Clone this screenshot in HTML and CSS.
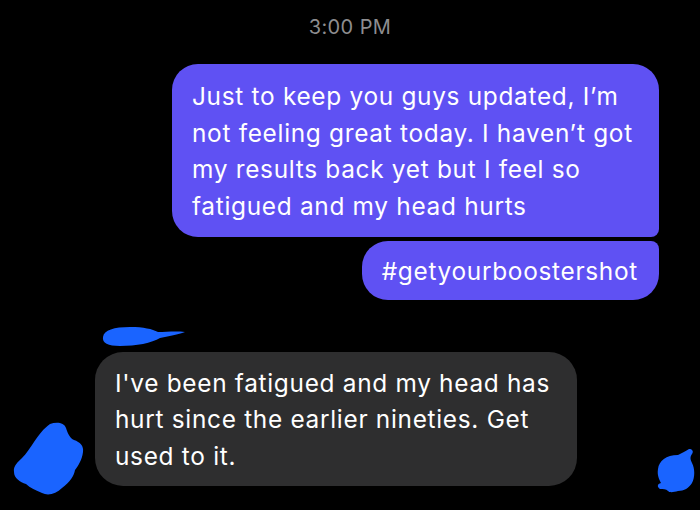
FILE: index.html
```html
<!DOCTYPE html>
<html lang="en">
<head>
  <meta charset="UTF-8">
  <title>Messages</title>
  <link rel="stylesheet" href="styles.css">
</head>
<body>
  <div class="chat">
    <div class="time">3:00 PM</div>

    <div class="out-group">
      <div class="msg out first">Just to keep you guys updated, I’m not feeling great today. I haven’t got my results back yet but I feel so fatigued and my head hurts</div>
      <div class="msg out last">#getyourboostershot</div>
    </div>

    <div class="in-group">
      <svg class="scribble name-scribble" viewBox="0 0 86 21" width="86" height="21">
        <path d="M3 11 C4 4 14 1 30 1 C44 1 52 3 58 6 C66 6 76 5 85 6 C80 8 70 10 60 12 C52 17 36 20 20 20 C8 20 2 17 3 11 Z" />
      </svg>
      <div class="in-row">
        <svg class="scribble avatar-scribble" viewBox="0 0 72 74" width="72" height="74">
          <path d="M38 2 C44 0 52 0 54 6 C56 12 58 16 62 18 C68 20 72 24 71 30 C70 38 66 44 63 48 C62 54 58 60 50 66 C44 72 36 74 30 71 C24 68 18 66 14 62 C8 60 2 56 2 50 C1 44 6 40 10 36 C14 32 18 26 22 20 C26 14 32 6 38 2 Z" />
        </svg>
        <div class="msg in">I've been fatigued and my head has hurt since the earlier nineties. Get used to it.</div>
      </div>
    </div>

    <svg class="scribble corner-scribble" viewBox="0 0 40 44" width="40" height="44">
      <path d="M22 6 C26 4 30 2 33 0 C36 0 38 2 36 5 C34 8 34 10 36 14 C39 20 39 28 36 34 C33 39 28 42 22 42 C18 43 14 44 12 42 C10 40 7 40 4 40 C1 38 1 35 5 34 C3 30 1 26 2 20 C3 12 10 6 22 6 Z" />
    </svg>
  </div>
</body>
</html>
```

FILE: styles.css
```css
* {
  box-sizing: border-box;
}

body {
  margin: 0;
  background: #000000;
  font-family: Inter, 'Liberation Sans', sans-serif;
  -webkit-font-smoothing: antialiased;
}

.chat {
  position: relative;
  width: 700px;
  height: 510px;
  overflow: hidden;
  padding-top: 13px;
}

.time {
  text-align: center;
  color: #8d8d8f;
  font-size: 20px;
  line-height: 28px;
  letter-spacing: 0.4px;
}

.out-group {
  display: flex;
  flex-direction: column;
  align-items: flex-end;
  gap: 4px;
  margin-top: 23px;
  padding-right: 41px;
}

.msg {
  font-size: 24.4px;
  line-height: 36.7px;
  letter-spacing: 0.7px;
  color: #ffffff;
}

.msg.out {
  background: #5f51f3;
}

.msg.out.first {
  width: 487px;
  padding: 14px 20px 12px 20px;
  border-radius: 26px 26px 8px 26px;
}

.msg.out.last {
  padding: 12px 21px 10px 20px;
  border-radius: 26px 8px 26px 26px;
}

.in-group {
  margin-top: 26px;
}

.in-row {
  display: flex;
  align-items: flex-start;
  margin-top: 5px;
}

.msg.in {
  width: 482px;
  margin-left: 11px;
  background: #2e2e2f;
  padding: 13px 20px 11px 20px;
  border-radius: 28px;
}

.scribble path {
  fill: #1a64ff;
}

.name-scribble {
  display: block;
  margin-left: 100px;
}

.avatar-scribble {
  margin-top: 70px;
  margin-left: 12px;
}

.corner-scribble {
  position: absolute;
  left: 656px;
  top: 449px;
}
```
